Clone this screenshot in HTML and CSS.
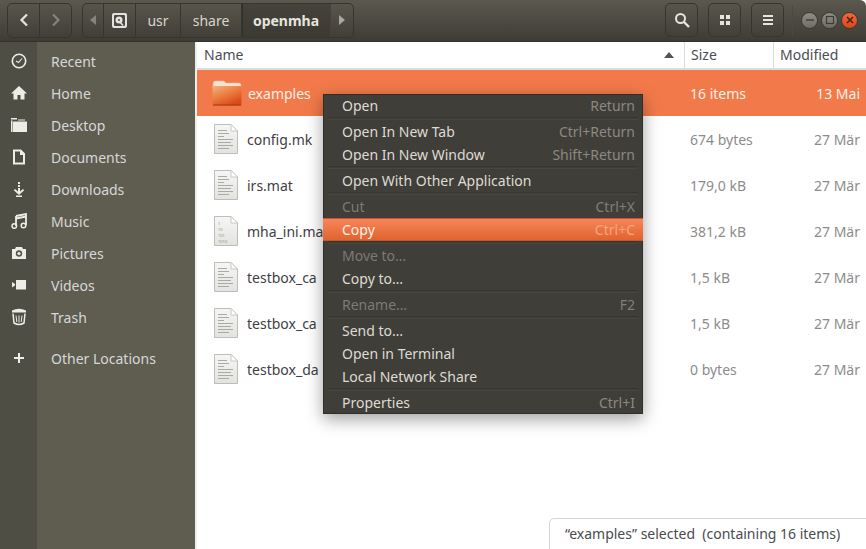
FILE: index.html
```html
<!DOCTYPE html>
<html lang="en">
<head>
    <meta charset="UTF-8">
    <title>openmha</title>
    <link rel="stylesheet" href="styles.css">
</head>
<body>
    <svg class="defs" width="0" height="0">
        <linearGradient id="foldergrad" x1="0" y1="0" x2="0.6" y2="1">
            <stop offset="0" stop-color="#f3b27e"/>
            <stop offset="0.55" stop-color="#ea7a3c"/>
            <stop offset="1" stop-color="#d9481a"/>
        </linearGradient>
        <linearGradient id="filegrad" x1="0" y1="0" x2="0" y2="1">
            <stop offset="0" stop-color="#f6f6f5"/>
            <stop offset="1" stop-color="#e2e2df"/>
        </linearGradient>
        <symbol id="page" viewBox="0 0 24 30">
            <path d="M.5.5H17L23.500 7V29.500H.5Z" fill="url(#filegrad)" stroke="#bdbdb9"/>
            <path d="M17 .5V7H23.500Z" fill="#fff" stroke="#c8c8c4"/>
        </symbol>
        <symbol id="textfile" viewBox="0 0 24 30">
            <use href="#page" width="24" height="30"/>
            <path d="M4 6.500H13M4 9.500H15M4 12.500H10M4 15.500H19M4 18.500H17M4 21.500H19M4 24.500H15" stroke="#a9a9a5" fill="none"/>
        </symbol>
    </svg>

    <div class="window">
        <header class="toolbar">
            <div class="btn-group nav">
                <button class="tbtn">
                    <svg width="12" height="14" viewBox="0 0 12 14"><path d="M9 1.500 3.500 7 9 12.500" fill="none" stroke="#e6e4de" stroke-width="2.200"/></svg>
                </button>
                <button class="tbtn">
                    <svg width="12" height="14" viewBox="0 0 12 14"><path d="M3 1.500 8.500 7 3 12.500" fill="none" stroke="#85837a" stroke-width="2.200"/></svg>
                </button>
            </div>
            <div class="btn-group path">
                <button class="seg seg-arrow">
                    <svg width="6" height="10" viewBox="0 0 6 10"><path d="M6 0V10L0 5Z" fill="#85837a"/></svg>
                </button>
                <button class="seg seg-disk">
                    <svg width="15" height="15" viewBox="0 0 15 15"><rect width="15" height="15" rx="2" fill="#e4e2dc"/><rect x="2" y="2" width="11" height="11" rx="1" fill="#4a4840"/><circle cx="7" cy="7" r="3.500" fill="#e4e2dc"/><circle cx="7" cy="7" r="1" fill="#4a4840"/><path d="M8 9 11 12.500" stroke="#e4e2dc" stroke-width="1.600"/></svg>
                </button>
                <button class="seg seg-usr">usr</button>
                <button class="seg seg-share">share</button>
                <button class="seg seg-current">openmha</button>
                <button class="seg seg-arrow seg-end">
                    <svg width="6" height="10" viewBox="0 0 6 10"><path d="M0 0V10L6 5Z" fill="#a9a79e"/></svg>
                </button>
            </div>
            <div class="toolbar-right">
                <button class="tbtn single">
                    <svg width="16" height="16" viewBox="0 0 16 16"><circle cx="6.500" cy="6.500" r="4.500" fill="none" stroke="#e6e4de" stroke-width="2"/><path d="M10 10 15 15" stroke="#e6e4de" stroke-width="2.400"/></svg>
                </button>
                <button class="tbtn single">
                    <svg width="12" height="12" viewBox="0 0 12 12"><path d="M1 1H5V5H1ZM7 1H11V5H7ZM1 7H5V11H1ZM7 7H11V11H7Z" fill="#e6e4de"/></svg>
                </button>
                <button class="tbtn single">
                    <svg width="12" height="12" viewBox="0 0 12 12"><path d="M1 1H11V3H1ZM1 5H11V7H1ZM1 9H11V11H1Z" fill="#e6e4de"/></svg>
                </button>
                <span class="tsep"></span>
                <div class="wm">
                    <span class="wm-btn"><svg width="10" height="10" viewBox="0 0 10 10"><path d="M1 5H9" stroke="#3c3b35" stroke-width="1.400"/></svg></span>
                    <span class="wm-btn"><svg width="10" height="10" viewBox="0 0 10 10"><rect x="1.500" y="1.500" width="7" height="7" fill="none" stroke="#3c3b35" stroke-width="1.200"/></svg></span>
                    <span class="wm-btn wm-close"><svg width="10" height="10" viewBox="0 0 10 10"><path d="M2 2 8 8M8 2 2 8" stroke="#4a2010" stroke-width="1.500"/></svg></span>
                </div>
            </div>
        </header>

        <div class="main">
            <nav class="sidebar">
                <a class="place">
                    <span class="place-icon"><svg width="16" height="16" viewBox="0 0 16 16"><circle cx="8" cy="8" r="6.700" fill="none" stroke="#eeece6" stroke-width="1.600"/><path d="M5 8 7.500 9.500 11 5.500" fill="none" stroke="#eeece6" stroke-width="1.100"/></svg></span>
                    Recent
                </a>
                <a class="place">
                    <span class="place-icon"><svg width="16" height="16" viewBox="0 0 16 16"><path d="M8 1 0 8.500H2.500V14.500H6.500V10H9.500V14.500H13.500V8.500H16Z" fill="#eeece6"/></svg></span>
                    Home
                </a>
                <a class="place">
                    <span class="place-icon"><svg width="16" height="16" viewBox="0 0 16 16"><path d="M0 1H6V2.500H0ZM0 3.500H1.500V15H0ZM2.500 4.500H16V15H2V5ZM7 2.500H14V3.500H7Z" fill="#eeece6"/></svg></span>
                    Desktop
                </a>
                <a class="place">
                    <span class="place-icon"><svg width="16" height="16" viewBox="0 0 16 16"><path d="M3 1.500H9.500L13 5V14.500H3Z" fill="none" stroke="#eeece6" stroke-width="2"/><path d="M9 1H10L14 5V6H9Z" fill="#eeece6"/></svg></span>
                    Documents
                </a>
                <a class="place">
                    <span class="place-icon"><svg width="16" height="16" viewBox="0 0 16 16"><path d="M7 1H9V3H7ZM7 4H9V6H7ZM7 7H9V10.500L12 8 13.200 9.200 8 14 2.800 9.200 4 8 7 10.500ZM5 14.500H11V16H5Z" fill="#eeece6"/></svg></span>
                    Downloads
                </a>
                <a class="place">
                    <span class="place-icon"><svg width="16" height="16" viewBox="0 0 16 16"><path d="M5 3 15 1V12" fill="none" stroke="#eeece6" stroke-width="1.800"/><path d="M5 3V13" stroke="#eeece6" stroke-width="1.800"/><path d="M5 5.500 15 3.500" stroke="#eeece6" stroke-width="1.800"/><circle cx="3.300" cy="13" r="2.300" fill="none" stroke="#eeece6" stroke-width="1.500"/><circle cx="12.500" cy="12.500" r="2.300" fill="none" stroke="#eeece6" stroke-width="1.500"/></svg></span>
                    Music
                </a>
                <a class="place">
                    <span class="place-icon"><svg width="16" height="16" viewBox="0 0 16 16"><path d="M5 2H11L12 4H15V14H1V4H4Z" fill="#eeece6"/><circle cx="8" cy="8.500" r="3.200" fill="#55544a"/><circle cx="8" cy="8.500" r="1.600" fill="#eeece6"/></svg></span>
                    Pictures
                </a>
                <a class="place">
                    <span class="place-icon"><svg width="16" height="16" viewBox="0 0 16 16"><path d="M5 3H15V12.500H5ZM1 5 4 7V8.500L1 10.500Z" fill="#eeece6"/></svg></span>
                    Videos
                </a>
                <a class="place">
                    <span class="place-icon"><svg width="16" height="18" viewBox="0 0 16 18"><path d="M1 2.500Q8 -1 15 2.500V4.500H1Z" fill="#eeece6"/><path d="M2 5.500 3 15Q8 18 13 15L14 5.500" fill="none" stroke="#eeece6" stroke-width="1.500"/><path d="M5 7.500 5.800 14M8 7.500V14.500M11 7.500 10.200 14" stroke="#eeece6"/></svg></span>
                    Trash
                </a>
                <a class="place other">
                    <span class="place-icon"><svg width="12" height="12" viewBox="0 0 12 12"><path d="M5 1H7V5H11V7H7V11H5V7H1V5H5Z" fill="#eeece6"/></svg></span>
                    Other Locations
                </a>
            </nav>

            <section class="files">
                <div class="colhead">
                    <div class="col col-name">Name
                        <svg class="sort" width="10" height="6" viewBox="0 0 10 6"><path d="M5 0 10 6H0Z" fill="#55544e"/></svg>
                    </div>
                    <div class="col col-size">Size</div>
                    <div class="col col-mod">Modified</div>
                </div>

                <div class="row selected">
                    <div class="cell-name">
                        <svg class="ficon" width="30" height="26" viewBox="0 0 30 26"><path d="M1 4Q1 1 3 1H12L14 3H27Q29 3 29 5V8H1Z" fill="#f6e2d4" stroke="#e9b898" stroke-width=".6"/><path d="M.5 6H29.500V24Q29.500 25.500 28 25.500H2Q.5 25.500 .5 24Z" fill="url(#foldergrad)"/><path d="M1 25H29" stroke="#a83a14"/></svg>
                        <span>examples</span>
                    </div>
                    <div class="cell-size">16 items</div>
                    <div class="cell-mod">13 Mai</div>
                </div>
                <div class="row">
                    <div class="cell-name"><svg class="ficon" width="24" height="30"><use href="#textfile"/></svg><span>config.mk</span></div>
                    <div class="cell-size">674 bytes</div>
                    <div class="cell-mod">27 Mär</div>
                </div>
                <div class="row">
                    <div class="cell-name"><svg class="ficon" width="24" height="30"><use href="#textfile"/></svg><span>irs.mat</span></div>
                    <div class="cell-size">179,0 kB</div>
                    <div class="cell-mod">27 Mär</div>
                </div>
                <div class="row">
                    <div class="cell-name">
                        <svg class="ficon" width="24" height="30" viewBox="0 0 24 30">
                            <use href="#page" width="24" height="30"/>
                            <text class="bin" x="4" y="9">1</text>
                            <text class="bin" x="4" y="15">10</text>
                            <text class="bin" x="4" y="21">101</text>
                            <text class="bin" x="4" y="27">1010</text>
                        </svg>
                        <span>mha_ini.mat</span>
                    </div>
                    <div class="cell-size">381,2 kB</div>
                    <div class="cell-mod">27 Mär</div>
                </div>
                <div class="row">
                    <div class="cell-name"><svg class="ficon" width="24" height="30"><use href="#textfile"/></svg><span>testbox_ca</span></div>
                    <div class="cell-size">1,5 kB</div>
                    <div class="cell-mod">27 Mär</div>
                </div>
                <div class="row">
                    <div class="cell-name"><svg class="ficon" width="24" height="30"><use href="#textfile"/></svg><span>testbox_ca</span></div>
                    <div class="cell-size">1,5 kB</div>
                    <div class="cell-mod">27 Mär</div>
                </div>
                <div class="row">
                    <div class="cell-name"><svg class="ficon" width="24" height="30"><use href="#textfile"/></svg><span>testbox_da</span></div>
                    <div class="cell-size">0 bytes</div>
                    <div class="cell-mod">27 Mär</div>
                </div>
            </section>
        </div>

        <ul class="menu">
            <li><span>Open</span><kbd>Return</kbd></li>
            <li class="sep"></li>
            <li><span>Open In New Tab</span><kbd>Ctrl+Return</kbd></li>
            <li><span>Open In New Window</span><kbd>Shift+Return</kbd></li>
            <li class="sep"></li>
            <li><span>Open With Other Application</span></li>
            <li class="sep"></li>
            <li class="off"><span>Cut</span><kbd>Ctrl+X</kbd></li>
            <li class="current"><span>Copy</span><kbd>Ctrl+C</kbd></li>
            <li class="sep"></li>
            <li class="off"><span>Move to…</span></li>
            <li><span>Copy to…</span></li>
            <li class="sep"></li>
            <li class="off"><span>Rename…</span><kbd>F2</kbd></li>
            <li class="sep"></li>
            <li><span>Send to…</span></li>
            <li><span>Open in Terminal</span></li>
            <li><span>Local Network Share</span></li>
            <li class="sep"></li>
            <li><span>Properties</span><kbd>Ctrl+I</kbd></li>
        </ul>

        <div class="status">“examples” selected  (containing 16 items)</div>
    </div>
</body>
</html>
```

FILE: styles.css
```css
* {
    margin: 0;
    padding: 0;
    box-sizing: border-box;
}

body {
    width: 866px;
    height: 549px;
    overflow: hidden;
    background: #fff;
    font-family: "Noto Sans", "Open Sans", sans-serif;
    font-size: 14px;
}

.defs {
    position: absolute;
}

.window {
    position: relative;
    width: 866px;
    height: 549px;
    overflow: hidden;
    display: flex;
    flex-direction: column;
}

button {
    font: inherit;
    border: 0;
    background: none;
    color: inherit;
}

/* toolbar */
.toolbar {
    height: 42px;
    flex: none;
    display: flex;
    align-items: center;
    padding: 0 8px 1px 7px;
    color: #d8d6cf;
    background: linear-gradient(#5b584e, #3e3c35);
    border-bottom: 1px solid #33322c;
    border-top-right-radius: 6px;
}

.btn-group {
    display: flex;
    height: 35px;
    border: 1px solid #36352f;
    border-radius: 5px;
    overflow: hidden;
}

.nav {
    width: 65px;
}

.nav .tbtn {
    flex: 1;
}

.nav .tbtn + .tbtn {
    border-left: 1px solid #36352f;
}

.tbtn {
    display: flex;
    align-items: center;
    justify-content: center;
}

.path {
    margin-left: 10px;
    width: 272px;
}

.seg {
    display: flex;
    align-items: center;
    justify-content: center;
    border-right: 1px solid #36352f;
}

.seg-arrow {
    width: 21px;
}

.seg-disk {
    width: 32px;
}

.seg-usr {
    width: 45px;
}

.seg-share {
    width: 61px;
}

.seg-current {
    width: 88px;
    font-weight: 700;
    color: #e6e4de;
    border-right: 0;
    background: linear-gradient(#45433b, #3b3a33);
    box-shadow: inset 1px 0 #302f2a;
}

.seg-end {
    flex: 1;
    border-right: 0;
    border-left: 1px solid #45433c;
}

.toolbar-right {
    margin-left: auto;
    display: flex;
    align-items: center;
    gap: 10px;
}

.tbtn.single {
    width: 33px;
    height: 34px;
    border: 1px solid #36352f;
    border-radius: 5px;
}

.tsep {
    width: 1px;
    height: 30px;
    margin-left: -2px;
    background: #4b4a42;
}

.wm {
    display: flex;
    gap: 3px;
    margin-left: -2px;
}

.wm-btn {
    width: 17px;
    height: 17px;
    border-radius: 50%;
    display: flex;
    align-items: center;
    justify-content: center;
    background: linear-gradient(#8f8d84, #6e6c63);
    border: 1px solid #3a3932;
}

.wm-close {
    background: linear-gradient(#f0683a, #d9481c);
}

/* sidebar */
.main {
    flex: 1;
    display: flex;
    min-height: 0;
}

.sidebar {
    width: 197px;
    flex: none;
    padding-top: 3px;
    color: #d5d8da;
    background: linear-gradient(90deg, #4f4e45 37px, #5f5d50 37px);
    border-right: 2px solid #eeeeec;
}

.place {
    height: 32px;
    display: flex;
    align-items: center;
}

.place-icon {
    width: 37px;
    margin-right: 14px;
    display: flex;
    justify-content: center;
}

.other {
    margin-top: 9px;
}

/* file list */
.files {
    flex: 1;
    min-width: 0;
    color: #3f4045;
}

.colhead {
    height: 28px;
    display: flex;
    align-items: center;
    color: #4b4d52;
    border-bottom: 2px solid #dcdcda;
}

.col {
    height: 100%;
    display: flex;
    align-items: center;
    padding-bottom: 1px;
}

.col-name {
    width: 487px;
    padding-left: 7px;
    justify-content: space-between;
    padding-right: 10px;
}

.col-size {
    width: 89px;
    padding-left: 6px;
    border-left: 1px solid #dcdcda;
}

.col-mod {
    flex: 1;
    padding-left: 6px;
    border-left: 1px solid #dcdcda;
}

.row {
    height: 46px;
    display: flex;
    align-items: center;
    color: #8c8c8c;
}

.cell-name {
    width: 487px;
    display: flex;
    align-items: center;
    color: #3f4045;
    white-space: nowrap;
}

.ficon {
    flex: none;
    margin-left: 17px;
    margin-right: 9px;
}

.selected .ficon {
    margin-left: 15px;
    margin-right: 6px;
}

.cell-size {
    width: 90px;
    padding-left: 6px;
}

.cell-mod {
    flex: 1;
    text-align: right;
    padding-right: 6px;
    white-space: nowrap;
}

.selected,
.selected .cell-name {
    background: #f27a4a;
    color: #fdf0e8;
}

.bin {
    font-size: 4px;
    fill: #8e8e8a;
}

/* context menu */
.menu {
    position: absolute;
    left: 323px;
    top: 94px;
    width: 320px;
    height: 320px;
    list-style: none;
    color: #dedbd3;
    background: #403e39;
    box-shadow: inset 0 0 0 1px #2f2e29, 0 5px 16px rgba(0, 0, 0, .38);
}

.menu li {
    height: 23px;
    padding: 0 8px 0 19px;
    display: flex;
    align-items: center;
    justify-content: space-between;
    white-space: nowrap;
}

.menu li.sep {
    height: 3px;
    padding: 0;
    margin: 0 5px;
    border-top: 1px solid #37362f;
    border-bottom: 1px solid #47463f;
    background: #403e39;
}

.menu kbd {
    font: inherit;
    color: #8b8980;
}

.menu .off {
    color: #7d7b72;
}

.menu .off kbd {
    color: #807e75;
}

.menu .current {
    color: #fdf0e8;
    background: linear-gradient(#f6885b, #e0612d);
    box-shadow: inset 0 1px #c9562a, inset 0 -1px #c9562a;
}

.menu .current kbd {
    color: #f5a680;
}

/* floating status bar */
.status {
    position: absolute;
    left: 549px;
    right: -4px;
    bottom: -4px;
    height: 35px;
    padding: 5px 0 0 15px;
    white-space: pre;
    color: #4a4b4f;
    background: #fff;
    border: 1px solid #d5d5d3;
    border-top-left-radius: 5px;
}
```
